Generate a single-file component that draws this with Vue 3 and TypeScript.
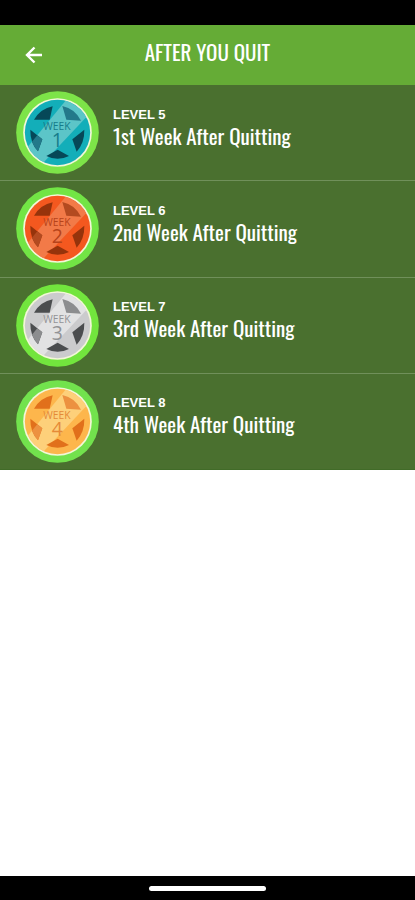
<script setup lang="ts">
interface Level {
  id: number
  title: string
  week: number
  disc: string
  shine: string
  hole: string
  holeLight: string
  ink: string
  ring: string
}

const levels: Level[] = [
  { id: 5, title: '1st Week After Quitting', week: 1, disc: '#13aeb9', shine: '#5cc5c8', hole: '#064858', holeLight: '#23798a', ink: '#167c8b', ring: '#7de448' },
  { id: 6, title: '2nd Week After Quitting', week: 2, disc: '#f4581f', shine: '#f27a48', hole: '#96330b', holeLight: '#b34a20', ink: '#b6431a', ring: '#72e545' },
  { id: 7, title: '3rd Week After Quitting', week: 3, disc: '#cbcbcd', shine: '#e2e2e3', hole: '#4b4d4f', holeLight: '#8c8d8f', ink: '#929396', ring: '#72e53d' },
  { id: 8, title: '4th Week After Quitting', week: 4, disc: '#fdb64c', shine: '#fdd07a', hole: '#e1701b', holeLight: '#ec9140', ink: '#e58a37', ring: '#72e24d' },
]
</script>

<template>
  <div class="screen">
    <div class="status"></div>
    <header class="bar">
      <button class="back" type="button" aria-label="Back">
        <svg viewBox="0 0 18 18" width="18" height="18" fill="none" stroke="#fff" stroke-width="2.4">
          <path d="M17 9H2M9.500 1.500L2 9l7.500 7.500" />
        </svg>
      </button>
      <h1>AFTER YOU QUIT</h1>
    </header>
    <main>
      <ul class="levels">
        <li v-for="l in levels" :key="l.id">
          <a href="#" class="level">
            <svg class="badge" viewBox="25 22 249 249" aria-hidden="true">
              <defs>
                <clipPath :id="`shine-${l.id}`">
                  <path d="M50 202L176 48L244 92L104 240Z" />
                </clipPath>
                <clipPath :id="`disc-${l.id}`"><circle cx="149.500" cy="146.500" r="98" /></clipPath>
              </defs>
              <circle cx="149.500" cy="146.500" r="124" :fill="l.ring" />
              <circle cx="149.500" cy="146.500" r="103" fill="#f3f7d8" />
              <circle cx="149.500" cy="146.500" r="98" :fill="l.disc" />
              <g :clip-path="`url(#disc-${l.id})`">
                <path d="M50 202L176 48L244 92L104 240Z" :fill="l.shine" />
              </g>
              <g :fill="l.hole">
                <path d="M79 108Q99 75 135 68L126 108Z" />
                <path d="M68 138L104 167L91 203Q67 177 68 138Z" />
                <path d="M230 138L194 167L207 204Q231 177 230 138Z" />
                <path d="M116 217L150 198L184 217Q150 234 116 217Z" />
              </g>
              <g :fill="l.holeLight">
                <path d="M164 67Q202 75 220 111L176 108Z" />
                <path d="M68 138L104 167L91 203Q67 177 68 138Z" :clip-path="`url(#shine-${l.id})`" />
              </g>
              <text x="148" y="138" font-size="31" :fill="l.ink">WEEK</text>
              <text x="149" y="190" font-size="58" :fill="l.ink">{{ l.week }}</text>
            </svg>
            <span class="copy">
              <span class="tag">LEVEL {{ l.id }}</span>
              <span class="title">{{ l.title }}</span>
            </span>
          </a>
        </li>
      </ul>
    </main>
    <footer class="home"><span></span></footer>
  </div>
</template>

<style>
body {
  margin: 0;
}
</style>

<style scoped>
.screen {
  display: flex;
  flex-direction: column;
  min-height: 100vh;
  background: #fff;
  color: #fff;
  font-family: "Liberation Sans", Arial, sans-serif;
}
.status {
  height: 25px;
  background: #000;
}
.bar {
  display: grid;
  grid-template-columns: 68px 1fr 68px;
  align-items: center;
  height: 60px;
  background: #65ac36;
}
.back {
  display: flex;
  justify-content: center;
  padding: 12px 0;
  border: 0;
  background: none;
}
h1 {
  margin: 0;
  padding-bottom: 6px;
  text-align: center;
  font: 400 21px/28px Oswald, "Liberation Sans Narrow", sans-serif;
}
main {
  flex: 1;
}
.levels {
  display: grid;
  grid-auto-rows: 1fr;
  min-height: 385px;
  margin: 0;
  padding: 0;
  list-style: none;
  background: #4a702f;
}
li {
  display: grid;
  border-bottom: 1px solid #70905a;
}
li:last-child {
  border-color: #416b28;
}
.level {
  display: flex;
  align-items: center;
  gap: 14px;
  padding: 0 16px;
  color: #fff;
  text-decoration: none;
}
.badge {
  flex: none;
  width: 83px;
  height: 83px;
}
.badge text {
  font-family: "Open Sans", sans-serif;
  font-weight: 500;
  text-anchor: middle;
}
.copy {
  display: flex;
  flex-direction: column;
  padding-bottom: 8px;
}
.tag {
  font-size: 13px;
  line-height: 14px;
  font-weight: 700;
}
.title {
  font: 430 21px/28px Oswald, "Liberation Sans Narrow", sans-serif;
}
.home {
  display: flex;
  justify-content: center;
  align-items: center;
  height: 24px;
  background: #000;
}
.home span {
  width: 28%;
  height: 5px;
  border-radius: 3px;
  background: #fff;
}
</style>
